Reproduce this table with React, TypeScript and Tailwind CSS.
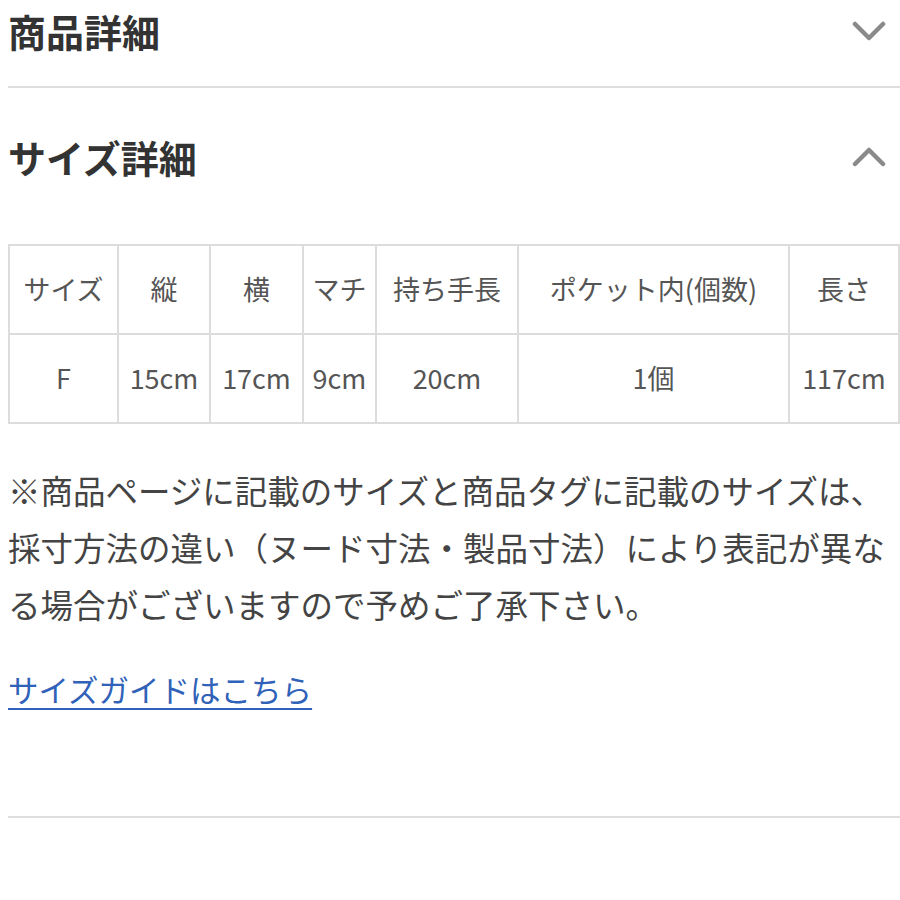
import React from "react";

const font = { fontFamily: '"Noto Sans CJK JP", "Noto Sans", sans-serif' };

const cols = [
  { head: "サイズ", value: "F", w: "w-[109px]" },
  { head: "縦", value: "15cm", w: "w-[92px]" },
  { head: "横", value: "17cm", w: "w-[93px]" },
  { head: "マチ", value: "9cm", w: "w-[73px]" },
  { head: "持ち手長", value: "20cm", w: "w-[142px]" },
  { head: "ポケット内(個数)", value: "1個", w: "w-[271px]" },
  { head: "長さ", value: "117cm", w: "w-[110px]" },
];

function Chevron({ up }: { up?: boolean }) {
  return (
    <svg width="34" height="22" viewBox="0 0 34 22" fill="none" className="mr-[14px]">
      <polyline
        points={up ? "3,18 17,4 31,18" : "3,4 17,18 31,4"}
        stroke="#8a8a8a"
        strokeWidth="4.5"
        strokeLinecap="round"
        strokeLinejoin="round"
      />
    </svg>
  );
}

export default function App() {
  return (
    <div className="w-[900px] h-[900px] bg-white overflow-hidden text-[#333]" style={font}>
      {/* 商品詳細 */}
      <div className="pl-[8px] h-[62px] flex items-center justify-between">
        <h2 className="text-[38px] font-bold leading-none">商品詳細</h2>
        <Chevron />
      </div>
      <div className="mt-[24px] ml-[8px] h-[2px] bg-[#dedede]" />

      {/* サイズ詳細 */}
      <div className="mt-[44px] pl-[8px] h-[50px] flex items-center justify-between">
        <h2 className="text-[38px] font-bold leading-none">サイズ詳細</h2>
        <Chevron up />
      </div>

      <div className="pl-[8px] mt-[62px]">
        <table className="table-fixed border-collapse w-[890px] text-[27px] text-[#555]">
          <colgroup>
            {cols.map((c) => (
              <col key={c.head} className={c.w} />
            ))}
          </colgroup>
          <tbody>
            <tr className="h-[89px]">
              {cols.map((c) => (
                <td key={c.head} className="border-2 border-[#dcdcdc] text-center align-middle whitespace-nowrap">
                  {c.head}
                </td>
              ))}
            </tr>
            <tr className="h-[89px]">
              {cols.map((c) => (
                <td key={c.head} className="border-2 border-[#dcdcdc] text-center align-middle whitespace-nowrap">
                  {c.value}
                </td>
              ))}
            </tr>
          </tbody>
        </table>
      </div>

      <p className="mt-[37px] pl-[8px] w-[890px] text-[32.5px] leading-[57px] text-[#444]">
        ※商品ページに記載のサイズと商品タグに記載のサイズは、採寸方法の違い（ヌード寸法・製品寸法）により表記が異なる場合がございますので予めご了承下さい。
      </p>

      <div className="mt-[29px] pl-[8px] leading-[57px]">
        <a href="#" className="text-[30.5px] text-[#2f62b8] underline underline-offset-[6px] decoration-2">
          サイズガイドはこちら
        </a>
      </div>

      <div className="mt-[92px] ml-[8px] h-[2px] bg-[#dedede]" />
    </div>
  );
}
